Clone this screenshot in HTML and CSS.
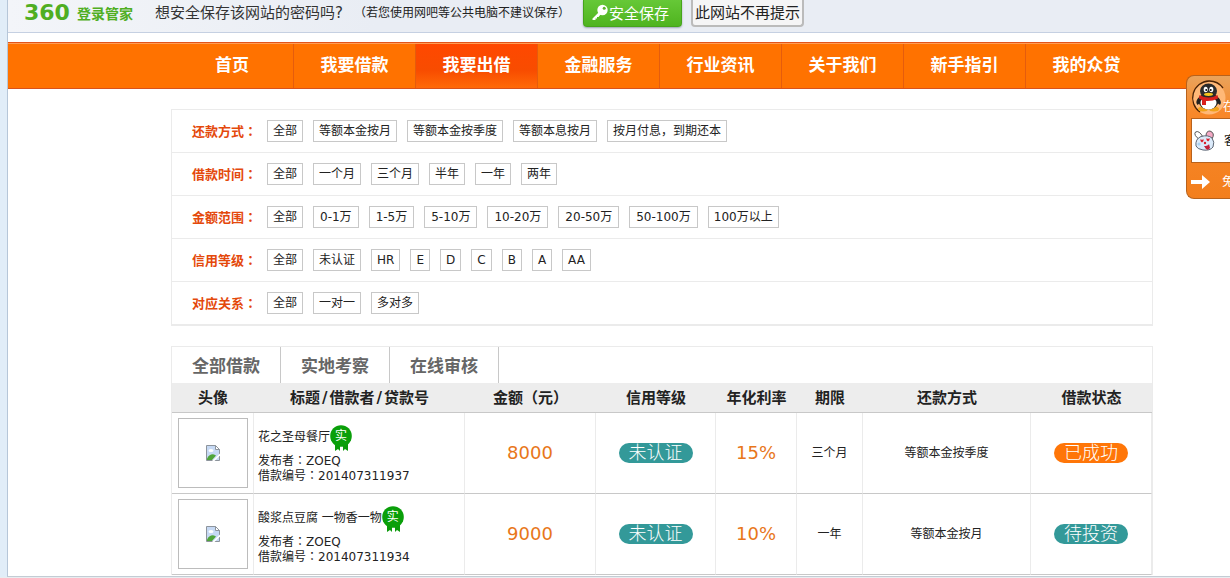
FILE: index.html
```html
<!DOCTYPE html>
<html lang="zh-CN">
<head>
<meta charset="utf-8">
<title>我要出借</title>
<link rel="stylesheet" href="styles.css">
</head>
<body>
<div class="page">
  <div class="savebar">
    <div class="brand"><span class="brand-num">360</span><span class="brand-name">登录管家</span></div>
    <p class="ask">想安全保存该网站的密码吗?</p>
    <p class="hint">（若您使用网吧等公共电脑不建议保存）</p>
    <button class="btn btn-save" type="button">
      <svg width="17" height="17" viewBox="0 0 17 17" aria-hidden="true"><path d="M7.500 7.500.5 14.500v1.500h3v-1.500h1.500v-1.500h1.500l2.500-3z" fill="#fff"/><circle cx="10.500" cy="6" r="5.200" fill="#fff"/><circle cx="12.200" cy="4.300" r="1.500" fill="#5cb52a"/></svg>
      安全保存
    </button>
    <button class="btn btn-never" type="button">此网站不再提示</button>
  </div>

  <nav class="nav">
    <a href="#">首页</a>
    <a href="#">我要借款</a>
    <a href="#" class="active">我要出借</a>
    <a href="#">金融服务</a>
    <a href="#">行业资讯</a>
    <a href="#">关于我们</a>
    <a href="#">新手指引</a>
    <a href="#">我的众贷</a>
  </nav>

  <main class="content">
    <section class="filters">
      <div class="filter"><b>还款方式<span class="colon">：</span></b><a href="#">全部</a><a href="#">等额本金按月</a><a href="#">等额本金按季度</a><a href="#">等额本息按月</a><a href="#">按月付息，到期还本</a></div>
      <div class="filter"><b>借款时间<span class="colon">：</span></b><a href="#">全部</a><a href="#">一个月</a><a href="#">三个月</a><a href="#">半年</a><a href="#">一年</a><a href="#">两年</a></div>
      <div class="filter amounts"><b>金额范围<span class="colon">：</span></b><a href="#" class="all">全部</a><a href="#">0-1万</a><a href="#">1-5万</a><a href="#">5-10万</a><a href="#">10-20万</a><a href="#">20-50万</a><a href="#">50-100万</a><a href="#" class="all">100万以上</a></div>
      <div class="filter"><b>信用等级<span class="colon">：</span></b><a href="#">全部</a><a href="#">未认证</a><a href="#">HR</a><a href="#">E</a><a href="#">D</a><a href="#">C</a><a href="#">B</a><a href="#">A</a><a href="#">AA</a></div>
      <div class="filter"><b>对应关系<span class="colon">：</span></b><a href="#">全部</a><a href="#">一对一</a><a href="#">多对多</a></div>
    </section>

    <section class="loans">
      <div class="tabs">
        <button type="button">全部借款</button>
        <button type="button">实地考察</button>
        <button type="button">在线审核</button>
      </div>
      <table>
        <colgroup><col class="c-pic"><col class="c-title"><col class="c-sum"><col class="c-grade"><col class="c-rate"><col class="c-term"><col class="c-way"><col class="c-state"></colgroup>
        <thead>
          <tr><th>头像</th><th>标题<span class="slash">/</span>借款者<span class="slash">/</span>贷款号</th><th>金额（元）</th><th>信用等级</th><th>年化利率</th><th>期限</th><th>还款方式</th><th>借款状态</th></tr>
        </thead>
        <tbody>
          <tr>
            <td><div class="avatar"><svg width="14" height="16" viewBox="0 0 14 16" role="img" aria-label="头像"><path d="M.5.5h9l4 4v11H.5z" fill="#c6d9f4" stroke="#8d949c"/><path d="M9.500.5v4h4z" fill="#fff" stroke="#8d949c"/><ellipse cx="5" cy="5.500" rx="2.500" ry="1.500" fill="#fff"/><path d="M1 15v-1.500Q4 8.500 8 9.500l2 1L6 15z" fill="#4fa53a"/><path d="M14 8.500v2L8.500 16H6z" fill="#fff"/></svg></div></td>
            <td class="info">
              <div class="title">花之圣母餐厅<span class="badge"><svg width="22" height="27" viewBox="0 0 22 27" aria-hidden="true"><path d="M5 18v8l3-2 2 2v-6h3v6l2-2 3 2v-8z" fill="#0a9a0a"/><circle cx="11" cy="11" r="10.800" fill="#0a9f0a"/></svg><i>实</i></span></div>
              <div>发布者<span class="colon">：</span>ZOEQ</div>
              <div>借款编号<span class="colon">：</span>201407311937</div>
            </td>
            <td class="num">8000</td>
            <td><span class="pill">未认证</span></td>
            <td class="num">15%</td>
            <td>三个月</td>
            <td>等额本金按季度</td>
            <td><span class="pill done">已成功</span></td>
          </tr>
          <tr>
            <td><div class="avatar"><svg width="14" height="16" viewBox="0 0 14 16" role="img" aria-label="头像"><path d="M.5.5h9l4 4v11H.5z" fill="#c6d9f4" stroke="#8d949c"/><path d="M9.500.5v4h4z" fill="#fff" stroke="#8d949c"/><ellipse cx="5" cy="5.500" rx="2.500" ry="1.500" fill="#fff"/><path d="M1 15v-1.500Q4 8.500 8 9.500l2 1L6 15z" fill="#4fa53a"/><path d="M14 8.500v2L8.500 16H6z" fill="#fff"/></svg></div></td>
            <td class="info">
              <div class="title">酸浆点豆腐 一物香一物<span class="badge"><svg width="22" height="27" viewBox="0 0 22 27" aria-hidden="true"><path d="M5 18v8l3-2 2 2v-6h3v6l2-2 3 2v-8z" fill="#0a9a0a"/><circle cx="11" cy="11" r="10.800" fill="#0a9f0a"/></svg><i>实</i></span></div>
              <div>发布者<span class="colon">：</span>ZOEQ</div>
              <div>借款编号<span class="colon">：</span>201407311934</div>
            </td>
            <td class="num">9000</td>
            <td><span class="pill">未认证</span></td>
            <td class="num">10%</td>
            <td>一年</td>
            <td>等额本金按月</td>
            <td><span class="pill">待投资</span></td>
          </tr>
        </tbody>
      </table>
    </section>
  </main>
</div>

<aside class="service">
  <div class="service-head">
    <svg width="36" height="36" viewBox="0 0 36 36" aria-hidden="true">
      <circle cx="18" cy="18" r="16.500" fill="#ffb877"/>
      <path d="M9 32A17 17 0 0 1 18 1a17 17 0 0 1 14 7" fill="none" stroke="#4a2205" stroke-width="1.300"/>
      <ellipse cx="12" cy="29" rx="5" ry="2.500" fill="#f0a21a"/><ellipse cx="23" cy="29" rx="5" ry="2.500" fill="#f0a21a"/>
      <path d="M9 16Q3 22 6.500 25L10 22zM26 16q6 6 3 9l-4-3z" fill="#222"/>
      <ellipse cx="17.500" cy="21" rx="10" ry="8.500" fill="#222"/>
      <ellipse cx="17.500" cy="23" rx="8" ry="6.500" fill="#fff"/>
      <ellipse cx="17.500" cy="11" rx="8.500" ry="7.500" fill="#2b2b2b"/>
      <ellipse cx="14.700" cy="9.500" rx="2" ry="2.800" fill="#fff"/><ellipse cx="20.300" cy="9.500" rx="2" ry="2.800" fill="#fff"/>
      <circle cx="15.200" cy="10" r=".9"/><circle cx="19.800" cy="10" r=".9"/>
      <ellipse cx="17.500" cy="14.300" rx="4.500" ry="1.600" fill="#f7c51e"/>
      <path d="M8.500 15q9 5 18 0l.5 3.500q-6 3-12 2.500v4h-4v-5l-3-1.500z" fill="#d8201c"/>
    </svg>
    <span>在</span>
  </div>
  <div class="service-agent">
    <svg width="22" height="22" viewBox="0 0 22 22" aria-hidden="true">
      <path d="M6 10Q-1 5 1.500 2 5 0 9 7z" fill="#fff" stroke="#555"/>
      <path d="M12 6q0-5 4-5Q21.500 3 18 9z" fill="#f3a8c4" stroke="#555"/>
      <path d="M2 16q-1-7 5-9.500 7-2 11 1.500 3 4 1 9-3 4-10 3-6-1-7-4z" fill="#dcebfb" stroke="#5d6673"/>
      <path d="m6.500 9 1.500 1 1.500-1v2L8 12.500 6.500 11zM12.500 8l1.500 1 1.500-1v2L14 11.500 12.500 10z" fill="#d8202c"/>
      <circle cx="11" cy="13" r="1.200" fill="#d8202c"/><path d="M10 16q4 0 5-2l1 4q-2 3-4 1z" fill="#c2203a"/><circle cx="5" cy="14" r="1.600" fill="#a9d2f2"/>
    </svg>
    <span>客</span>
  </div>
  <div class="service-free">
    <svg width="19" height="14" viewBox="0 0 19 14" aria-hidden="true"><path d="M0 5h11V0l8 7-8 7V9H0z" fill="#fff"/></svg>
    <span>免</span>
  </div>
</aside>
</body>
</html>
```
FILE: styles.css
```css
* { box-sizing: border-box; }

body {
  margin: 0;
  overflow: hidden;
  position: relative;
  min-height: 100vh;
  background: #e9edf0;
  color: #222;
  font: 12px/14px "DejaVu Sans", "Noto Sans CJK SC", sans-serif;
}

a { color: inherit; text-decoration: none; }
p { margin: 0; }
button { font-family: inherit; }

.page {
  background: #fff;
  border-left: 1px solid #b6c6d8;
  border-bottom: 1px solid #c3ccd4;
  box-shadow: -7px 0 0 #e1edf8;
  margin-left: 7px;
  padding-bottom: 1px;
}

/* centred full-width colon */
.colon {
  font-family: "Noto Sans CJK TC", sans-serif;
  font-feature-settings: "locl" 0;
}

.savebar {
  display: flex;
  height: 33px;
  padding-left: 16px;
  background: linear-gradient(90deg, #f3f5f9, #e9edf4 30%);
  border-bottom: 1px solid #c5d0e2;
  line-height: 26px;
  white-space: nowrap;
}

.brand { display: flex; gap: 7px; width: 131px; color: #4fae22; font-weight: bold; }
.brand-num { font-size: 22px; }
.brand-name { font-size: 14px; line-height: 28px; }
.ask { width: 199px; font-size: 15px; color: #333; }
.hint { width: 229px; }

.btn {
  display: flex;
  align-items: center;
  justify-content: center;
  height: 27px;
  padding: 0 0 2px;
  border-radius: 0 0 4px 4px;
  font-size: 15px;
}
.btn-save {
  width: 99px;
  margin-right: 9px;
  padding-right: 4px;
  border: 1px solid #46a41b;
  border-top: 0;
  background: linear-gradient(#66c837, #4fb41f);
  box-shadow: 0 1px 2px #9aa5b0;
  color: #fff;
}
.btn-never {
  width: 113px;
  border: 2px solid #bbb;
  border-top: 0;
  background: #f5f5f6;
  color: #222;
}

.nav {
  display: flex;
  height: 47px;
  margin-top: 9px;
  padding-left: 163px;
  border-top: 1px solid #e2541a;
  border-bottom: 1px solid #d9521a;
  background: #ff7200;
  box-shadow: inset 0 1px 0 #ff9c55;
}
.nav a {
  width: 122px;
  margin-top: 1px;
  color: #fff;
  font-size: 17px;
  font-weight: bold;
  line-height: 43px;
  text-align: center;
}
.nav a + a { border-left: 1px solid #e55c0c; }
.nav .active { background: linear-gradient(#ff4800, #f84c00 60%, #ff6a08); }

.content { max-width: 1145px; padding: 20px 0 0 163px; }

.filters { border: 1px solid #ebebeb; margin-bottom: 20px; }
.filter {
  display: flex;
  align-items: center;
  gap: 10px;
  height: 43px;
  padding-left: 20px;
  border-bottom: 1px solid #ebebeb;
  white-space: nowrap;
}
.filter b { width: 65px; color: #e4490c; font-size: 13px; }
.filter a {
  padding: 0 5px;
  border: 1px solid #c8c8c8;
  line-height: 20px;
}
.amounts a { padding: 0 6px; }
.amounts .all { padding: 0 5px; }

.loans { border: 1px solid #ebebeb; border-bottom: 0; }
.tabs { display: flex; height: 36px; }
.tabs button {
  width: 109px;
  padding: 0 0 2px;
  border: 0;
  border-right: 1px solid #c8c8c8;
  background: none;
  color: #666;
  font-size: 17px;
  font-weight: bold;
}

table { width: 100%; table-layout: fixed; border-collapse: separate; border-spacing: 0; }
.c-pic { width: 82px; }
.c-title { width: 211px; }
.c-sum { width: 131px; }
.c-grade { width: 120px; }
.c-rate { width: 81px; }
.c-term { width: 66px; }
.c-way { width: 168px; }
th {
  height: 30px;
  padding: 0;
  border-bottom: 1px solid #c8c8c8;
  background: #ededed;
  font-size: 15px;
}
.slash { margin: 0 2px; }
td {
  height: 81px;
  padding: 0;
  border-right: 1px solid #ebebeb;
  border-bottom: 1px solid #c8c8c8;
  text-align: center;
}

.avatar {
  display: flex;
  align-items: center;
  justify-content: center;
  width: 70px;
  height: 70px;
  margin: 0 auto;
  border: 1px solid #bcbcbc;
}
.info { padding-left: 4px; text-align: left; white-space: nowrap; }
.title { display: flex; height: 29px; padding-top: 1px; line-height: 24px; }
.badge { position: relative; }
.badge svg { display: block; }
.badge i {
  position: absolute;
  inset: 0;
  color: #fff;
  font-style: normal;
  line-height: 22px;
  text-align: center;
}
.num { color: #e8761a; font-size: 18px; }
.pill {
  display: inline-block;
  width: 74px;
  border-radius: 10px;
  background: #399;
  color: #fff;
  font-size: 18px;
  font-weight: 300;
  line-height: 20px;
}
.done { background: #ff7608; }

.service {
  position: absolute;
  top: 75px;
  right: 0;
  width: 44px;
  height: 124px;
  padding: 4px 0 0 4px;
  overflow: hidden;
  border: 1px solid #b8621c;
  border-right: 0;
  border-radius: 8px 0 0 8px;
  background: linear-gradient(#e9a35c, #f8882a 30%, #f37f1d);
  color: #fff;
  white-space: nowrap;
}
.service-head { display: flex; height: 38px; }
.service-head svg { flex: none; }
.service-head span { margin: 20px 0 0 -4px; }
.service-agent {
  display: flex;
  align-items: center;
  gap: 8px;
  height: 45px;
  padding-left: 2px;
  border: 1px solid #b8621c;
  border-right: 0;
  background: #fff;
  color: #111;
}
.service-agent svg { flex: none; }
.service-free { display: flex; align-items: center; gap: 12px; height: 38px; }
.service-free svg { flex: none; }
```
